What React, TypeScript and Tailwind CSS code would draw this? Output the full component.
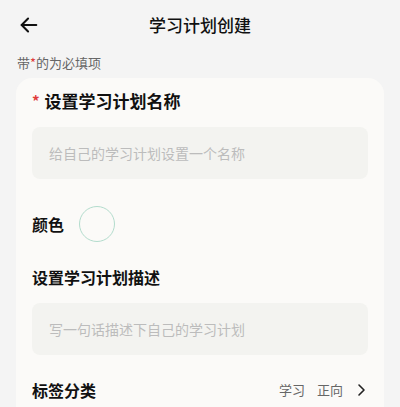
import React from "react";

export default function App() {
  return (
    <div
      className="w-[400px] h-[407px] overflow-hidden bg-[#f4f4f4] text-[#111]"
      style={{ fontFamily: '"Noto Sans CJK SC", "Noto Sans", sans-serif' }}
    >
      <div className="relative h-[50px] flex items-center justify-center">
        <svg
          className="absolute left-[18px] top-[14px]"
          width="22"
          height="22"
          viewBox="0 0 24 24"
          fill="none"
          stroke="#111"
          strokeWidth="2.2"
          strokeLinecap="round"
          strokeLinejoin="round"
        >
          <path d="M20 12H4" />
          <path d="M11 5l-7 7 7 7" />
        </svg>
        <span className="text-[17px] font-medium leading-none mt-[-2px]">学习计划创建</span>
      </div>
      <div className="px-[17px] h-[26px] flex items-center text-[13px] text-[#666]">
        带<span className="text-[#e03b3b]">*</span>的为必填项
      </div>
      <div className="mx-[16px] mt-[2px] bg-[#fbfaf8] rounded-[16px] px-[16px] pt-[10px] pb-[20px]">
        <div className="h-[26px] flex items-center text-[17px] font-bold">
          <span className="text-[#e03b3b] mr-[5px] text-[15px]">*</span>
          设置学习计划名称
        </div>
        <div className="mt-[13px] h-[52px] rounded-[8px] bg-[#f3f3f0] flex items-center px-[17px] text-[14px] text-[#bcbcbc]">
          给自己的学习计划设置一个名称
        </div>
        <div className="mt-[27px] flex items-center h-[36px]">
          <span className="text-[16px] font-bold w-[47px]">颜色</span>
          <div className="w-[36px] h-[36px] rounded-full border-[1.5px] border-[#b3dccd]" />
        </div>
        <div className="mt-[22px] h-[26px] flex items-center text-[16px] font-bold">
          设置学习计划描述
        </div>
        <div className="mt-[13px] h-[52px] rounded-[8px] bg-[#f3f3f0] flex items-center px-[17px] text-[14px] text-[#bcbcbc]">
          写一句话描述下自己的学习计划
        </div>
        <div className="mt-[22px] h-[26px] flex items-center">
          <span className="text-[16px] font-bold flex-1">标签分类</span>
          <span className="text-[13px] text-[#666]">学习</span>
          <span className="text-[13px] text-[#666] ml-[12px]">正向</span>
          <svg
            className="ml-[12px] mr-[1px]"
            width="12"
            height="16"
            viewBox="0 0 12 16"
            fill="none"
            stroke="#222"
            strokeWidth="1.6"
            strokeLinecap="round"
            strokeLinejoin="round"
          >
            <path d="M4 3l5 5-5 5" />
          </svg>
        </div>
      </div>
    </div>
  );
}
